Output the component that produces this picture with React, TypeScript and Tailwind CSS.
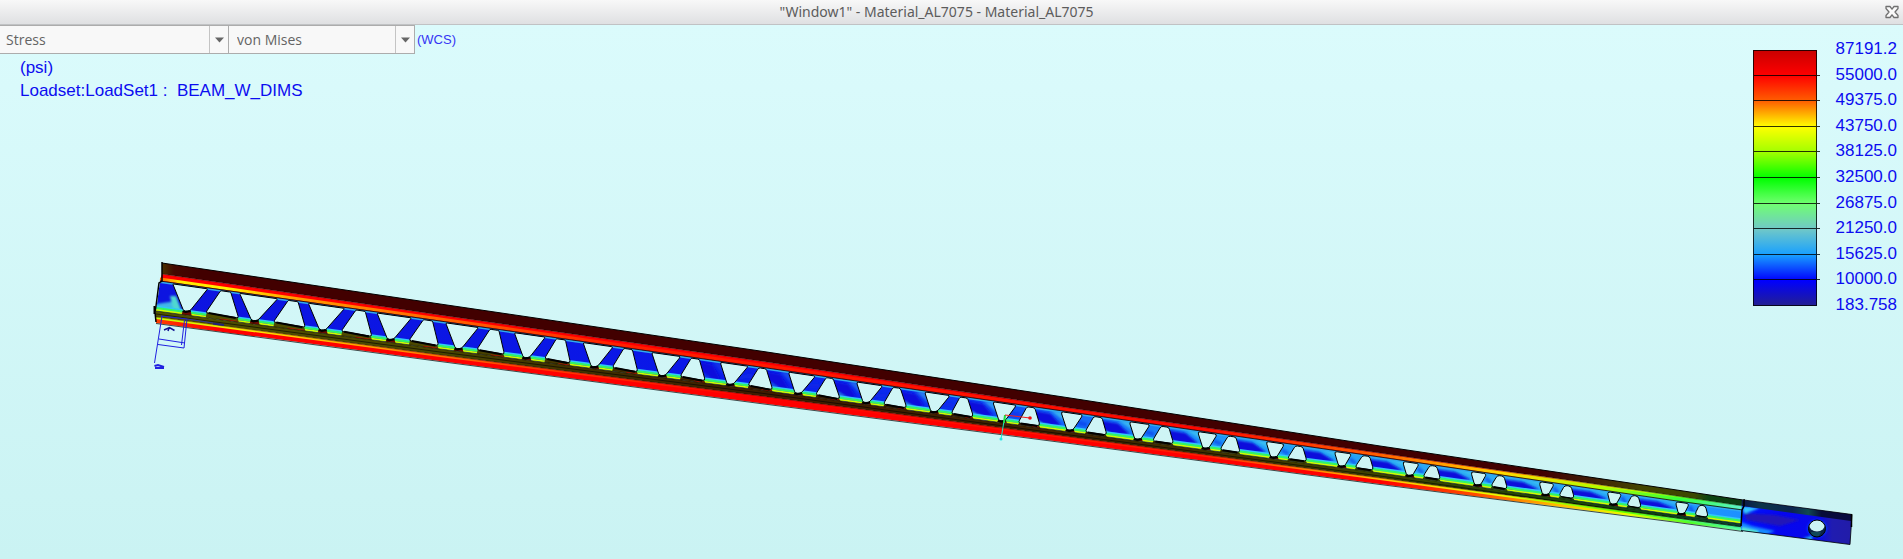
import React from "react";

type Pt = [number, number];

/* ---------- beam geometry: each edge is a polyline of [x, y] ---------- */
const TOP: Pt[] = [[162, 263], [440, 304], [760, 351], [1070, 398], [1380, 446], [1670, 489], [1743, 500]];
const FLANGE: Pt[] = [[162, 274], [440, 315], [760, 361], [1070, 408], [1380, 453], [1670, 495], [1743, 506]];
const WEB_TOP: Pt[] = [[160, 281], [440, 321], [760, 367], [1070, 412], [1380, 457], [1670, 500], [1743, 510]];
const WEB_BOTTOM: Pt[] = [[156, 311], [440, 349], [760, 390], [1070, 432], [1380, 473], [1670, 514], [1743, 524]];
const RAIL: Pt[] = [[156, 317], [440, 355], [760, 396], [1070, 437], [1380, 478], [1670, 517], [1743, 527]];
const BASE: Pt[] = [[156, 323], [440, 361], [760, 403], [1070, 443], [1380, 484], [1670, 521], [1743, 531]];

/* hole outlines: horizontal offsets from each apex, by panel index */
const DOWN_L: Pt[] = [[0, -14], [1, -15], [5, -12], [8, -10], [13, -9], [18, -7], [22, -6]];
const DOWN_R: Pt[] = [[0, 21], [1, 23], [5, 19], [8, 18], [11, 16], [13, 13], [17, 10], [22, 8]];
const UP_TL: Pt[] = [[0, 34], [3, 33], [5, 30], [9, 28], [13, 24], [17, 21], [22, 18]];
const UP_TR: Pt[] = [[0, 44], [3, 42], [5, 39], [9, 35], [13, 32], [17, 28], [22, 24]];
const UP_BL: Pt[] = [[0, 19], [5, 18], [11, 17], [13, 15], [17, 13], [22, 13]];
const UP_BR: Pt[] = [[0, 52], [3, 48], [5, 44], [9, 42], [13, 37], [17, 32], [22, 27]];

const PITCH = 67.94;

function at(line: Pt[], x: number): number {
  for (let k = 1; k < line.length; k++) {
    if (x <= line[k][0] || k === line.length - 1) {
      const [x0, y0] = line[k - 1];
      const [x1, y1] = line[k];
      return y0 + ((x - x0) / (x1 - x0)) * (y1 - y0);
    }
  }
  return line[0][1];
}

const shift = (line: Pt[], dy: number): Pt[] => line.map(([x, y]) => [x, y + dy]);
const poly = (pts: Pt[]) => "M" + pts.map((p) => p[0].toFixed(1) + " " + p[1].toFixed(1)).join("L");
const band = (a: Pt[], b: Pt[]) => poly([...a, ...[...b].reverse()]) + "Z";

function rounded(pts: Pt[], radii: number[]): string {
  const n = pts.length;
  const toward = (a: Pt, b: Pt, r: number): Pt => {
    const len = Math.hypot(b[0] - a[0], b[1] - a[1]);
    const t = Math.min(r / len, 0.45);
    return [a[0] + (b[0] - a[0]) * t, a[1] + (b[1] - a[1]) * t];
  };
  let d = "";
  for (let k = 0; k < n; k++) {
    const p = pts[k];
    const a = toward(p, pts[(k + n - 1) % n], radii[k]);
    const b = toward(p, pts[(k + 1) % n], radii[k]);
    d += `${k ? "L" : "M"}${a[0].toFixed(1)} ${a[1].toFixed(1)}Q${p[0].toFixed(1)} ${p[1].toFixed(1)} ${b[0].toFixed(1)} ${b[1].toFixed(1)}`;
  }
  return d + "Z";
}

const panels = Array.from({ length: 23 }, (_, i) => {
  const x = 186.7 + PITCH * i;
  const l = x + at(DOWN_L, i);
  const rt = x + at(DOWN_R, i);
  const apex = at(WEB_BOTTOM, x) - Math.max(2, 4 - i * 0.3);
  const r = 1 + i * 0.11;
  const down = rounded(
    [[l, at(WEB_TOP, l) + 1], [rt, at(WEB_TOP, rt) + 1], [x + 3, apex], [x - 3, apex]],
    [r, r, 2, 2],
  );
  const inset = Math.max(2, 5 - i * 0.25);
  const tl = x + at(UP_TL, i);
  const tr = x + at(UP_TR, i);
  const bl = x + at(UP_BL, i);
  const br = x + at(UP_BR, i);
  const blY = at(WEB_BOTTOM, bl) - inset;
  const brY = at(WEB_BOTTOM, br) - Math.max(2, inset - 1);
  const up = rounded(
    [[tl, at(WEB_TOP, tl) + 1], [tr, at(WEB_TOP, tr) + 1], [br, brY], [bl, blY]],
    [1 + i * 0.07, 1 + i * 0.07, 2 + i * 0.1, 2 + i * 0.1],
  );
  const shelf = poly([[bl + 1, blY], [br - 1, brY], [br, at(WEB_BOTTOM, br)], [bl, at(WEB_BOTTOM, bl)]]) + "Z";
  const prevBr = i ? x - PITCH + at(UP_BR, i - 1) : x - 28;
  return { i, x, l, rt, bl, br, blY, brY, apex, prevBr, down, up, shelf };
});

const webPath = band(WEB_TOP, WEB_BOTTOM);
const holes = panels.map((p) => p.down + p.up).join("");

function Ramp({ id, stops }: { id: string; stops: [number, string][] }) {
  return (
    <linearGradient id={id} gradientUnits="userSpaceOnUse" x1="150" y1="0" x2="1750" y2="0">
      {stops.map(([x, c]) => (
        <stop key={x} offset={(x - 150) / 1600} stopColor={c} />
      ))}
    </linearGradient>
  );
}

function Beam() {
  return (
    <svg viewBox="0 25 1903 534" className="block w-full" role="img" aria-label="Beam stress plot">
      <defs>
        <Ramp id="dark" stops={[[160, "#4a3a00"], [174, "#440800"], [200, "#420000"], [1540, "#420000"], [1590, "#401c08"], [1640, "#444400"], [1695, "#3c4800"], [1708, "#0c4410"], [1743, "#0c3c14"]]} />
        <Ramp id="upper" stops={[[160, "#ff0000"], [1370, "#ff0000"], [1480, "#ff4a00"], [1570, "#ffc800"], [1640, "#c8ff00"], [1695, "#40ff20"], [1743, "#50f0a0"]]} />
        <Ramp id="upperEdge" stops={[[160, "#ff6000"], [180, "#ffe800"], [225, "#fff000"], [300, "#ff9a00"], [430, "#ff6a00"], [620, "#ff2000"], [1200, "#ff0800"], [1380, "#ff6000"], [1500, "#ffd800"], [1600, "#b0ff00"], [1680, "#30ff40"], [1743, "#60f0d0"]]} />
        <Ramp id="rail" stops={[[156, "#505000"], [440, "#4a4600"], [600, "#403000"], [760, "#401c00"], [1070, "#402400"], [1380, "#404400"], [1560, "#204808"], [1670, "#0c4018"], [1743, "#0c4030"]]} />
        <Ramp id="lower" stops={[[156, "#ff4000"], [180, "#ff2000"], [220, "#ff0000"], [1380, "#ff0000"], [1480, "#ff5000"], [1560, "#ffc000"], [1630, "#e8ff00"], [1690, "#50ff20"], [1743, "#60ffb0"]]} />
        <Ramp id="lowerEdge" stops={[[156, "#c8ff00"], [260, "#ffe000"], [380, "#ff9800"], [520, "#ff4000"], [760, "#ff0000"], [1200, "#ff2000"], [1380, "#ffc000"], [1500, "#e8ff00"], [1620, "#60ff00"], [1743, "#40f0a0"]]} />
        <Ramp id="web" stops={[[156, "#0d14e0"], [700, "#0a18e8"], [950, "#0c30f0"], [1060, "#1464f8"], [1250, "#209cf8"], [1500, "#2cacf4"], [1743, "#1c90ff"]]} />
        <linearGradient id="tab" gradientUnits="userSpaceOnUse" x1="1741" y1="0" x2="1852" y2="0">
          <stop offset="0" stopColor="#0014ff" />
          <stop offset="0.35" stopColor="#0606f0" />
          <stop offset="0.7" stopColor="#0808e8" />
          <stop offset="0.82" stopColor="#201cb0" />
          <stop offset="1" stopColor="#221ca8" />
        </linearGradient>
        <linearGradient id="tabTop" gradientUnits="userSpaceOnUse" x1="1743" y1="0" x2="1852" y2="0">
          <stop offset="0" stopColor="#0c1848" />
          <stop offset="0.15" stopColor="#0c3448" />
          <stop offset="0.45" stopColor="#0c2450" />
          <stop offset="0.6" stopColor="#104850" />
          <stop offset="0.72" stopColor="#080c38" />
          <stop offset="1" stopColor="#080840" />
        </linearGradient>
        <clipPath id="webClip">
          <path d={webPath + holes} clipRule="evenodd" />
        </clipPath>
        <clipPath id="tabClip">
          <path d="M1742 506L1852 520L1850 544.500L1741 530.500Z" />
        </clipPath>
        <clipPath id="boreClip">
          <ellipse cx="1817" cy="528.500" rx="8.500" ry="8.500" />
        </clipPath>
        <filter id="soft" x="-5%" y="-20%" width="110%" height="140%">
          <feGaussianBlur stdDeviation="0.500" />
        </filter>
        <filter id="softer" x="-20%" y="-50%" width="140%" height="200%">
          <feGaussianBlur stdDeviation="1.300" />
        </filter>
      </defs>

      {/* web with its stress contours */}
      <g clipPath="url(#webClip)">
        <path d={webPath} fill="url(#web)" />
        {panels.map((p) => {
          const late = Math.max(0, Math.min(1, (p.i - 7) / 6));
          const w = p.l - p.prevBr;
          const a = p.prevBr;
          const ty = at(WEB_TOP, a);
          const by = at(WEB_BOTTOM, p.l);
          return (
            <g key={p.i} filter="url(#softer)">
              {p.i > 7 && (
                <>
                  <path d={poly([[p.l - w * 0.5, ty + 3], [p.l + 2, ty + 4], [p.l + 4, by - 9]]) + "Z"} fill="#40c8f0" opacity={late * 0.75} />
                  <path d={poly([[a - 2, by - 11], [a + w * 0.5, by - 4], [a - 2, by - 3]]) + "Z"} fill="#48e0d0" opacity={late * 0.8} />
                  <path d={poly([[a - 6, ty + 3], [a + w * 0.5, ty + 6], [p.l, by - 6], [p.l - w * 0.4, by - 5], [a + 2, ty + 16], [a - 4, ty + 12]]) + "Z"} fill="#0c10dc" />
                  <path d={poly([[p.x + 8, by - 8], [p.rt + 4, ty + 17]])} stroke="#0c28e8" strokeWidth="4" opacity={1 - late * 0.5} />
                </>
              )}
              {p.i === 0 && (
                <>
                  <path d="M156 304L176 301L182 316L154 314Z" fill="#40b8e8" />
                  <path d="M170 296L176 296L182 312L174 312Z" fill="#50d8d0" />
                </>
              )}
            </g>
          );
        })}
        <g filter="url(#soft)" fill="none">
          <path d={poly(shift(WEB_TOP, 1))} stroke="#30a8f0" strokeWidth="2" />
          <path d={poly(shift(WEB_BOTTOM, -4.5))} stroke="#30c8f8" strokeWidth="2" />
          <path d={poly(shift(WEB_BOTTOM, -3))} stroke="#30f860" strokeWidth="2" />
          <path d={poly(shift(WEB_BOTTOM, -1))} stroke="#d0ff00" strokeWidth="2" />
        </g>
      </g>
      {panels.map((p) => (
        <g key={p.i}>
          <path d={p.shelf} fill="url(#rail)" />
          <path d={poly([[p.x - 4, p.apex], [p.x + 4, p.apex], [p.x + 5, at(WEB_BOTTOM, p.x + 5)], [p.x - 5, at(WEB_BOTTOM, p.x - 5)]]) + "Z"} fill="#6a0c00" />
          {p.i < 13 && (
            <path d={poly([[p.bl + 14, at(WEB_BOTTOM, p.bl + 14) - 0.5], [p.br - 1, at(WEB_BOTTOM, p.br - 1) - 0.5]])} stroke="#c81800" strokeWidth="1" />
          )}
        </g>
      ))}
      <g fill="none" stroke="#000" strokeWidth="1" strokeLinejoin="round">
        {panels.map((p) => (
          <g key={p.i}>
            <path d={p.down} />
            <path d={p.up} />
            <path d={poly([[p.x - 4, p.apex], [p.x - 1, p.apex + 1], [p.x + 4, p.apex]])} strokeWidth="2" />
            <path d={poly([[p.bl + 3, p.blY + 0.5], [p.br - 3, p.brY]])} strokeWidth={p.i < 20 ? 2 : 1} />
          </g>
        ))}
      </g>

      {/* flanges */}
      <path d={band(TOP, FLANGE)} fill="url(#dark)" />
      <path d={band(FLANGE, WEB_TOP)} fill="url(#upper)" />
      <path d={poly(shift(WEB_TOP, -2))} fill="none" stroke="url(#upperEdge)" strokeWidth="3" />
      <path d={band(WEB_BOTTOM, RAIL)} fill="url(#rail)" />
      <path d={band(RAIL, BASE)} fill="url(#lower)" />
      <path d={poly(shift(RAIL, 1))} fill="none" stroke="url(#lowerEdge)" strokeWidth="2" />
      <g fill="none" stroke="#000" strokeWidth="1">
        <path d={poly(TOP)} />
        <path d={poly(FLANGE)} opacity="0.4" />
        <path d={poly(WEB_TOP)} opacity="0.8" />
        <path d={poly(WEB_BOTTOM)} opacity="0.5" />
        <path d={poly(shift(WEB_BOTTOM, 3))} opacity="0.6" />
        <path d={poly(RAIL)} opacity="0.35" />
        <path d={poly(shift(BASE, 0.5))} opacity="0.7" />
        <path d="M162 262L162 281L159 283L156 306L155 312L156 322" strokeWidth="1.500" />
        <path d="M154.500 306V314" strokeWidth="2" />
      </g>

      {/* end tab */}
      <path d="M1742 500L1852 514.500L1850 544.500L1741 530.500Z" fill="url(#tab)" />
      <g clipPath="url(#tabClip)">
        <g filter="url(#softer)">
          <path d="M1742 506L1760 508L1744 514Z" fill="#30c8ff" />
          <path d="M1741 532L1741 522L1752 526L1775 531L1765 535Z" fill="#1888ff" />
          <path d="M1741 532L1741 527L1758 531L1758 535Z" fill="#58f0d0" />
          <path d="M1744 513L1775 515L1800 520L1780 526L1746 520Z" fill="#2018b8" />
          <path d="M1803 538L1812 536L1812 541Z" fill="#20b8f0" />
          <ellipse cx="1817" cy="528.500" rx="10" ry="9" fill="#0838ff" />
        </g>
      </g>
      <path d="M1742 500L1852 514.500L1851 521L1742 506Z" fill="url(#tabTop)" />
      <g clipPath="url(#boreClip)">
        <rect x="1807" y="518" width="20" height="22" fill="#0c2444" />
        <path d="M1811 532L1821 532L1818 538L1812 537Z" fill="#104858" />
        <ellipse cx="1817" cy="525" rx="8" ry="6.500" fill="#ccf4f4" />
      </g>
      <g fill="none" stroke="#000" strokeWidth="1">
        <ellipse cx="1817" cy="528.500" rx="8.500" ry="8.500" />
        <path d="M1744 500L1852 514.500L1850 544.500L1741 530.500" opacity="0.8" />
        <path d="M1744 499V506L1742 510L1741 526" strokeWidth="1.500" />
        <path d="M1851.500 514V527" strokeWidth="1.500" />
      </g>

      {/* constraint glyph at the fixed end */}
      <g fill="none" stroke="#2020e0" strokeWidth="1">
        <path d="M162 316L154.500 363M159 339L185 343M158 344.500L184 348M187 319L184 348M184.500 320L181.500 345M161 316L187 319" />
        <path d="M164 330L169.500 327.500L174.500 330.500M169 328L168 331" stroke="#101090" strokeWidth="1.500" />
        <path d="M154.500 366L158 365L164 367M155 368H164" strokeWidth="2" />
        <path d="M213 323.500L224 325" stroke="#20207a" strokeWidth="2" />
        <path d="M187 319L213 323" stroke="#3030a0" />
      </g>

      {/* coordinate system triad */}
      <path d="M1005 415L1001 439" stroke="#20e8c8" strokeWidth="1" />
      <path d="M1005 415L1004 423" stroke="#20e040" strokeWidth="2" />
      <circle cx="1001" cy="439" r="1.500" fill="#20e8e8" />
      <path d="M1005 415L1030 418" stroke="#f02020" strokeWidth="1" />
      <circle cx="1030" cy="418" r="1.800" fill="#f01010" />
    </svg>
  );
}

function Picker({ label, options, width, inset }: { label: string; options: string[]; width: string; inset: string }) {
  return (
    <div className={"relative h-[29px] border border-l-0 border-[#acacac] bg-[#f8f8f8] " + width}>
      <select
        aria-label={label}
        className={"block h-[27px] w-full appearance-none bg-transparent pr-6 font-['Open_Sans','Noto_Sans',sans-serif] text-sm text-[#646464] outline-none " + inset}
      >
        {options.map((o) => (
          <option key={o}>{o}</option>
        ))}
      </select>
      <span className="pointer-events-none absolute inset-y-0 right-0 flex w-[19px] items-center justify-center border-l border-[#c4c4c4]">
        <svg width="9" height="6" viewBox="0 0 9 6" aria-hidden="true">
          <path d="M0 0.500H9L4.500 5.500Z" fill="#666" />
        </svg>
      </span>
    </div>
  );
}

const LEVELS = ["87191.2", "55000.0", "49375.0", "43750.0", "38125.0", "32500.0", "26875.0", "21250.0", "15625.0", "10000.0", "183.758"];

function Legend() {
  return (
    <div className="absolute top-[14px] right-[6px] flex gap-4">
      <div className="mt-[11px] flex h-[256px] w-[67px] flex-col bg-[linear-gradient(to_bottom,#c80000_0%,#ff0000_10%,#ff6000_20%,#ffff00_30%,#a0ff00_40%,#00ff00_50%,#70ff70_60%,#70c8c8_70%,#18a0ff_80%,#0000ff_90%,#242090_100%)] bg-[length:64px_100%] bg-no-repeat">
        {LEVELS.slice(1).map((v) => (
          <div key={v} className="flex-1 border-b border-black/80 first:*:border-t last:w-[64px]">
            <div className="h-full w-[64px] border-x border-black/80" />
          </div>
        ))}
      </div>
      <ol className="flex h-[275px] flex-col justify-between text-right text-[17px] leading-[19px] text-[#0c0cf0]">
        {LEVELS.map((v) => (
          <li key={v}>{v}</li>
        ))}
      </ol>
    </div>
  );
}

export default function App() {
  return (
    <div className="flex min-h-screen flex-col overflow-hidden font-['Liberation_Sans',Arial,sans-serif]">
      <header className="flex h-[25px] items-center border-b border-[#c0c2c4] bg-linear-to-b from-[#f8f8f8] to-[#dfe0e2] pr-1">
        <h1 className="flex-1 pr-3 text-center font-['Noto_Sans','Open_Sans',sans-serif] text-sm leading-6 text-[#5c5c5c]">
          "Window1" - Material_AL7075 - Material_AL7075
        </h1>
        <button type="button" aria-label="Close" className="flex size-[14px] items-center justify-center">
          <svg width="14" height="14" viewBox="0 0 14 14" fill="#fafafa" stroke="#707070" strokeWidth="1.300" strokeLinejoin="round" aria-hidden="true">
            <path d="M1 1.500H5L7 4.200L9 1.500H13V3.500L10 7L13 10.500V12.500H9L7 9.800L5 12.500H1V10.500L4 7L1 3.500Z" />
          </svg>
        </button>
      </header>
      <main className="relative flex-1 bg-linear-to-b from-[#dbfbfc] to-[#caf3f3]">
        <Beam />
        <div className="absolute top-0 left-0">
          <div className="flex">
            <Picker label="Quantity" options={["Stress"]} width="w-[229px]" inset="pl-1.5" />
            <Picker label="Component" options={["von Mises"]} width="w-[186px]" inset="pl-2" />
            <span className="pt-[5px] pl-0.5 text-[13px] leading-[19px] text-[#3434f4]">(WCS)</span>
          </div>
          <div className="pt-[2px] pl-5 text-[17px] leading-[23px] text-[#0c0cf0]">
            <p>(psi)</p>
            <p className="whitespace-pre">Loadset:LoadSet1 :  BEAM_W_DIMS</p>
          </div>
        </div>
        <Legend />
      </main>
    </div>
  );
}
